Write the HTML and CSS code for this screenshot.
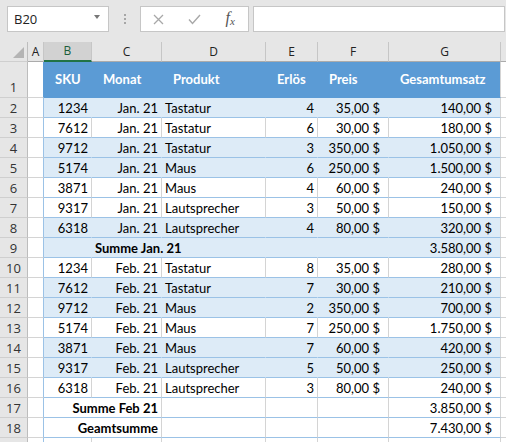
FILE: index.html
```html
<!DOCTYPE html>
<html lang="de">
<head>
    <meta charset="UTF-8">
    <meta name="viewport" content="width=device-width, initial-scale=1.0">
    <title>Umsatz</title>
    <link rel="stylesheet" href="styles.css">
</head>
<body>
    <div class="formulabar">
        <div class="namebox"><span>B20</span><span class="arrow"></span></div>
        <div class="grip"><i></i><i></i><i></i></div>
        <div class="btns">
            <span><svg width="11" height="11" viewBox="0 0 11 11"><path d="M1 1L10 10M10 1L1 10" stroke="#a8a8a8" stroke-width="1.3" fill="none"/></svg></span>
            <span><svg width="13" height="11" viewBox="0 0 13 11"><path d="M1 5.5L4.5 9.5L12 1" stroke="#a8a8a8" stroke-width="1.4" fill="none"/></svg></span>
            <span class="fx">f<small>x</small></span>
        </div>
        <div class="input"></div>
    </div>

    <div class="sheet">
        <div class="row colhead">
            <div class="rh corner"><span class="tri"></span></div>
            <div>A</div><div class="sel">B</div><div>C</div><div>D</div><div>E</div><div>F</div><div>G</div><div class="h"></div>
        </div>

        <div class="row head">
            <div class="rh">1</div><div class="a"></div>
            <div>SKU</div><div>Monat</div><div>Produkt</div><div>Erlös</div><div>Preis</div><div>Gesamtumsatz</div>
            <div class="h"></div>
        </div>

        <div class="row band">
            <div class="rh">2</div><div class="a"></div>
            <div class="r">1234</div><div class="r">Jan. 21</div><div>Tastatur</div><div class="r">4</div><div class="r acc">35,00 $</div><div class="r acc">140,00 $</div>
            <div class="h"></div>
        </div>
        <div class="row">
            <div class="rh">3</div><div class="a"></div>
            <div class="r">7612</div><div class="r">Jan. 21</div><div>Tastatur</div><div class="r">6</div><div class="r acc">30,00 $</div><div class="r acc">180,00 $</div>
            <div class="h"></div>
        </div>
        <div class="row band">
            <div class="rh">4</div><div class="a"></div>
            <div class="r">9712</div><div class="r">Jan. 21</div><div>Tastatur</div><div class="r">3</div><div class="r acc">350,00 $</div><div class="r acc">1.050,00 $</div>
            <div class="h"></div>
        </div>
        <div class="row band">
            <div class="rh">5</div><div class="a"></div>
            <div class="r">5174</div><div class="r">Jan. 21</div><div>Maus</div><div class="r">6</div><div class="r acc">250,00 $</div><div class="r acc">1.500,00 $</div>
            <div class="h"></div>
        </div>
        <div class="row">
            <div class="rh">6</div><div class="a"></div>
            <div class="r">3871</div><div class="r">Jan. 21</div><div>Maus</div><div class="r">4</div><div class="r acc">60,00 $</div><div class="r acc">240,00 $</div>
            <div class="h"></div>
        </div>
        <div class="row">
            <div class="rh">7</div><div class="a"></div>
            <div class="r">9317</div><div class="r">Jan. 21</div><div>Lautsprecher</div><div class="r">3</div><div class="r acc">50,00 $</div><div class="r acc">150,00 $</div>
            <div class="h"></div>
        </div>
        <div class="row band">
            <div class="rh">8</div><div class="a"></div>
            <div class="r">6318</div><div class="r">Jan. 21</div><div>Lautsprecher</div><div class="r">4</div><div class="r acc">80,00 $</div><div class="r acc">320,00 $</div>
            <div class="h"></div>
        </div>
        <div class="row band">
            <div class="rh">9</div><div class="a"></div>
            <div></div><div class="b span2">Summe Jan. 21</div><div></div><div></div><div class="r acc">3.580,00 $</div>
            <div class="h"></div>
        </div>

        <div class="row">
            <div class="rh">10</div><div class="a"></div>
            <div class="r">1234</div><div class="r">Feb. 21</div><div>Tastatur</div><div class="r">8</div><div class="r acc">35,00 $</div><div class="r acc">280,00 $</div>
            <div class="h"></div>
        </div>
        <div class="row band">
            <div class="rh">11</div><div class="a"></div>
            <div class="r">7612</div><div class="r">Feb. 21</div><div>Tastatur</div><div class="r">7</div><div class="r acc">30,00 $</div><div class="r acc">210,00 $</div>
            <div class="h"></div>
        </div>
        <div class="row band">
            <div class="rh">12</div><div class="a"></div>
            <div class="r">9712</div><div class="r">Feb. 21</div><div>Maus</div><div class="r">2</div><div class="r acc">350,00 $</div><div class="r acc">700,00 $</div>
            <div class="h"></div>
        </div>
        <div class="row">
            <div class="rh">13</div><div class="a"></div>
            <div class="r">5174</div><div class="r">Feb. 21</div><div>Maus</div><div class="r">7</div><div class="r acc">250,00 $</div><div class="r acc">1.750,00 $</div>
            <div class="h"></div>
        </div>
        <div class="row band">
            <div class="rh">14</div><div class="a"></div>
            <div class="r">3871</div><div class="r">Feb. 21</div><div>Maus</div><div class="r">7</div><div class="r acc">60,00 $</div><div class="r acc">420,00 $</div>
            <div class="h"></div>
        </div>
        <div class="row band">
            <div class="rh">15</div><div class="a"></div>
            <div class="r">9317</div><div class="r">Feb. 21</div><div>Lautsprecher</div><div class="r">5</div><div class="r acc">50,00 $</div><div class="r acc">250,00 $</div>
            <div class="h"></div>
        </div>
        <div class="row">
            <div class="rh">16</div><div class="a"></div>
            <div class="r">6318</div><div class="r">Feb. 21</div><div>Lautsprecher</div><div class="r">3</div><div class="r acc">80,00 $</div><div class="r acc">240,00 $</div>
            <div class="h"></div>
        </div>
        <div class="row">
            <div class="rh">17</div><div class="a"></div>
            <div class="r b span2">Summe Feb 21</div><div></div><div></div><div></div><div class="r acc">3.850,00 $</div>
            <div class="h"></div>
        </div>
        <div class="row">
            <div class="rh">18</div><div class="a"></div>
            <div class="r b span2">Geamtsumme</div><div></div><div></div><div></div><div class="r acc">7.430,00 $</div>
            <div class="h"></div>
        </div>
        <!-- only the top edge of row 19 is visible -->
        <div class="row">
            <div class="rh"></div><div class="a"></div>
            <div class="out"></div><div class="out"></div><div class="out"></div><div class="out"></div><div class="out"></div><div class="out"></div>
            <div class="h"></div>
        </div>
    </div>
</body>
</html>
```

FILE: styles.css
```css
html, body {
    margin: 0;
    padding: 0;
    height: 442px;
    overflow: hidden;
    background: #fff;
}

body {
    font-family: Lato, sans-serif;
    color: #000;
}

/* formula bar */

.formulabar {
    display: flex;
    align-items: flex-start;
    height: 42px;
    padding: 6px 1px 0 7px;
    box-sizing: border-box;
    background: #e6e6e6;
}

.namebox {
    width: 102px;
    height: 26px;
    box-sizing: border-box;
    border: 1px solid #c6c6c6;
    background: #fff;
    display: flex;
    align-items: center;
    justify-content: space-between;
    padding: 0 8px 0 6px;
    font-family: "Open Sans", sans-serif;
    font-size: 13px;
    color: #222;
}

.arrow {
    width: 0;
    height: 0;
    border-left: 3px solid transparent;
    border-right: 3px solid transparent;
    border-top: 4px solid #777;
    margin-top: -4px;
}

.grip {
    width: 31px;
    display: flex;
    flex-direction: column;
    align-items: center;
    gap: 2px;
    padding-top: 8px;
}

.grip i {
    width: 2px;
    height: 2px;
    background: #a6a6a6;
}

.btns {
    width: 109px;
    height: 26px;
    box-sizing: border-box;
    border: 1px solid #c6c6c6;
    background: #fff;
    display: flex;
}

.btns span {
    width: 36px;
    display: flex;
    align-items: center;
    justify-content: center;
}

.btns .fx {
    font-family: "Liberation Serif", serif;
    font-style: italic;
    font-size: 16px;
    color: #555;
    padding-bottom: 2px;
}

.btns .fx small {
    font-size: 11px;
    margin-top: 5px;
}

.input {
    flex: 1;
    height: 26px;
    box-sizing: border-box;
    border: 1px solid #c6c6c6;
    background: #fff;
    margin-left: 4px;
}

/* sheet grid */

.row {
    display: grid;
    grid-template-columns: 28px 16px 48px 70px 104px 52px 71px 112px 1fr;
    height: 20px;
}

.row > div {
    box-sizing: border-box;
    border-right: 1px solid #d4d4d4;
    border-bottom: 1px solid #9bc2e6;
    padding: 0 3px 1px;
    display: flex;
    align-items: flex-end;
    line-height: 16px;
    font-size: 13px;
    white-space: nowrap;
    overflow: hidden;
}

.row > .rh {
    background: #e6e6e6;
    border-right-color: #bdbdbd;
    border-bottom-color: #cfcfcf;
    justify-content: center;
    padding: 0 0 1px;
    font-family: "Open Sans", sans-serif;
    color: #333;
}

.row > .a {
    border-right-color: #9bc2e6;
    border-bottom-color: #d4d4d4;
}

.row > .h {
    border-right: 0;
    border-bottom-color: #d4d4d4;
}

.row > .out {
    border-bottom-color: #d4d4d4;
}

.r {
    justify-content: flex-end;
}

.row > .acc {
    padding-right: 8px;
}

.b {
    font-weight: 700;
}

.span2 {
    grid-column: span 2;
}

/* banded rows */

.band > div {
    background: #ddebf7;
    border-right-color: transparent;
}

.band > .rh {
    background: #e6e6e6;
}

.band > .a, .band > .h {
    background: #fff;
}

.band > div:nth-last-child(2) {
    border-right-color: #d4d4d4;
}

/* column letters */

.colhead > div {
    background: #e6e6e6;
    border-right-color: #c6c6c6;
    border-bottom-color: #ababab;
    justify-content: center;
    align-items: center;
    padding: 0;
    font-family: "Open Sans", sans-serif;
    font-size: 12px;
    color: #222;
}

.colhead > .sel {
    background: #d2d2d2;
    border-bottom: 2px solid #217346;
    color: #1b5e3a;
}

.colhead > .h {
    border-bottom-color: #ababab;
}

.colhead > .corner {
    justify-content: flex-end;
    align-items: flex-end;
    padding: 0 3px 3px 0;
}

.tri {
    width: 0;
    height: 0;
    border-left: 11px solid transparent;
    border-bottom: 11px solid #b4b4b4;
}

/* table header */

.head {
    height: 36px;
}

.head > div {
    background: #5b9bd5;
    border-right-color: #5b9bd5;
    border-bottom-color: #5b9bd5;
    color: #fff;
    font-weight: 700;
    align-items: center;
    padding-left: 11px;
}

.head > .rh {
    align-items: flex-end;
    padding: 0 0 2px;
    font-weight: 400;
}

.head > .a {
    background: #fff;
    border-right-color: #5b9bd5;
    border-bottom-color: #d4d4d4;
}

.head > .h {
    background: #fff;
    border-bottom-color: #d4d4d4;
}

.head > div:nth-last-child(2) {
    border-right-color: #d4d4d4;
}
```
